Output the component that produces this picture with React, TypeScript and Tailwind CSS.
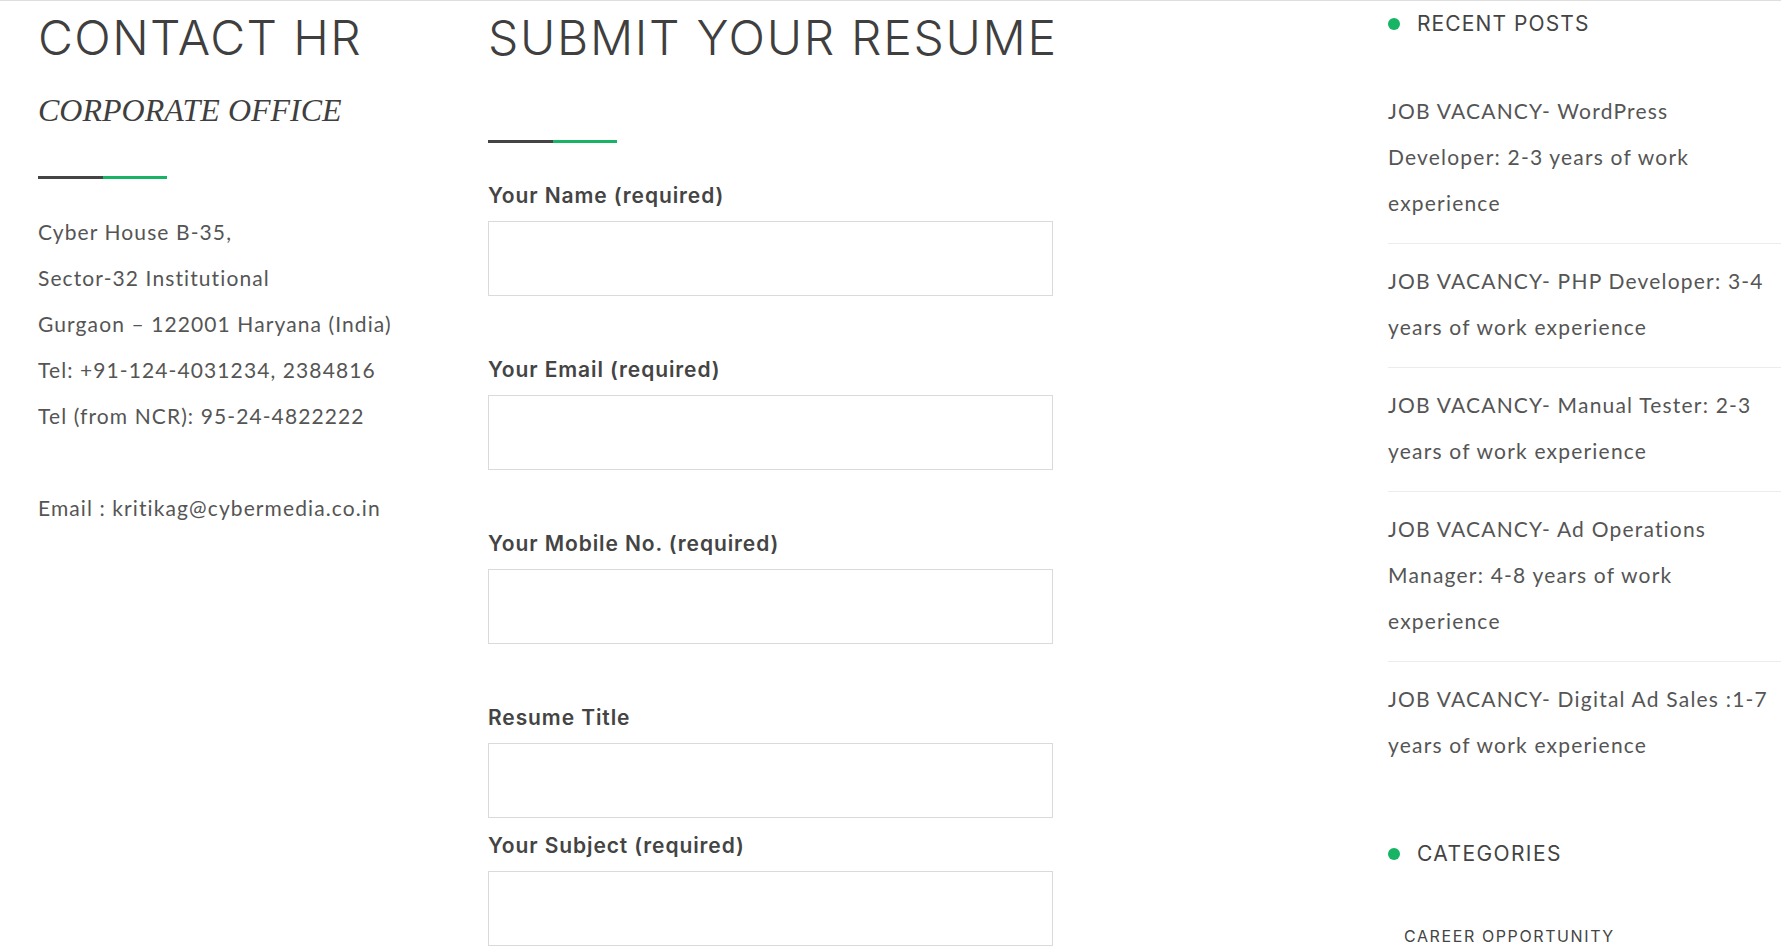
import React from "react";

const posts: string[][] = [
  ["JOB VACANCY- WordPress", "Developer: 2-3 years of work", "experience"],
  ["JOB VACANCY- PHP Developer: 3-4", "years of work experience"],
  ["JOB VACANCY- Manual Tester: 2-3", "years of work experience"],
  ["JOB VACANCY- Ad Operations", "Manager: 4-8 years of work", "experience"],
  ["JOB VACANCY- Digital Ad Sales :1-7", "years of work experience"],
];

const address = [
  "Cyber House B-35,",
  "Sector-32 Institutional",
  "Gurgaon – 122001 Haryana (India)",
  "Tel: +91-124-4031234, 2384816",
  "Tel (from NCR): 95-24-4822222",
];

function Field({ label, gap }: { label: string; gap: string }) {
  return (
    <div className={gap}>
      <label className="block font-['Inter',sans-serif] font-semibold text-[21px] leading-[30px] text-[#444444] tracking-[0.9px] whitespace-nowrap">
        {label}
      </label>
      <input
        type="text"
        className="mt-[10px] block w-[565px] h-[75px] border border-[#dadada] bg-white outline-none"
        aria-label={label}
      />
    </div>
  );
}

export default function App() {
  return (
    <div className="w-[1781px] h-[947px] overflow-hidden bg-white border-t border-[#dedede] flex pl-[38px]">
      {/* Left column */}
      <div className="w-[450px] shrink-0">
        <h1 className="mt-[8px] font-['Inter',sans-serif] font-light text-[48px] leading-[58px] text-[#3f3f3f] tracking-[1.4px] whitespace-nowrap">
          CONTACT HR
        </h1>
        <h2 className="mt-[23px] font-['Liberation_Serif',serif] italic text-[32px] leading-[40px] text-[#3f3f3f] whitespace-nowrap">
          CORPORATE OFFICE
        </h2>
        <div className="mt-[46px] flex h-[3px]">
          <div className="w-[65px] bg-[#444444]" />
          <div className="w-[64px] bg-[#16b464]" />
        </div>
        <div className="mt-[30px] font-['Lato','Noto_Sans',sans-serif] text-[21px] leading-[46px] text-[#555555] tracking-[1.1px]">
          {address.map((l) => (
            <div key={l} className="whitespace-nowrap">{l}</div>
          ))}
          <div className="h-[46px]" />
          <div className="whitespace-nowrap">Email : kritikag@cybermedia.co.in</div>
        </div>
      </div>

      {/* Middle column */}
      <div className="w-[900px] shrink-0">
        <h1 className="mt-[8px] font-['Inter',sans-serif] font-light text-[48px] leading-[58px] text-[#3f3f3f] tracking-[1.7px] whitespace-nowrap">
          SUBMIT YOUR RESUME
        </h1>
        <div className="mt-[73px] flex h-[3px]">
          <div className="w-[65px] bg-[#444444]" />
          <div className="w-[64px] bg-[#16b464]" />
        </div>
        <div className="mt-[38px]">
          <Field label="Your Name (required)" gap="mb-[59px]" />
          <Field label="Your Email (required)" gap="mb-[59px]" />
          <Field label="Your Mobile No. (required)" gap="mb-[59px]" />
          <Field label="Resume Title" gap="mb-[13px]" />
          <Field label="Your Subject (required)" gap="mb-0" />
        </div>
      </div>

      {/* Right sidebar */}
      <div className="flex-1 min-w-0">
        <div className="mt-[9px] flex items-center gap-[17px]">
          <span className="w-[12px] h-[12px] rounded-full bg-[#16b464]" />
          <span className="font-['Inter',sans-serif] text-[21px] leading-[28px] text-[#444444] tracking-[1.1px]">
            RECENT POSTS
          </span>
        </div>
        <ul className="mt-[36px]">
          {posts.map((p, i) => (
            <li
              key={i}
              className={
                "pt-[14px] pb-[17px] font-['Lato','Noto_Sans',sans-serif] text-[21px] leading-[46px] text-[#555555] tracking-[1.2px] " +
                (i < posts.length - 1 ? "border-b border-[#ececec]" : "")
              }
            >
              {p.map((line) => (
                <span key={line} className="block whitespace-nowrap">{line}</span>
              ))}
            </li>
          ))}
        </ul>
        <div className="mt-[55px] flex items-center gap-[17px]">
          <span className="w-[12px] h-[12px] rounded-full bg-[#16b464]" />
          <span className="font-['Inter',sans-serif] text-[21px] leading-[28px] text-[#444444] tracking-[1.4px]">
            CATEGORIES
          </span>
        </div>
        <div className="mt-[56px] pl-[16px] font-['Inter',sans-serif] text-[16px] leading-[24px] text-[#444444] tracking-[1.6px] whitespace-nowrap">
          CAREER OPPORTUNITY
        </div>
      </div>
    </div>
  );
}
